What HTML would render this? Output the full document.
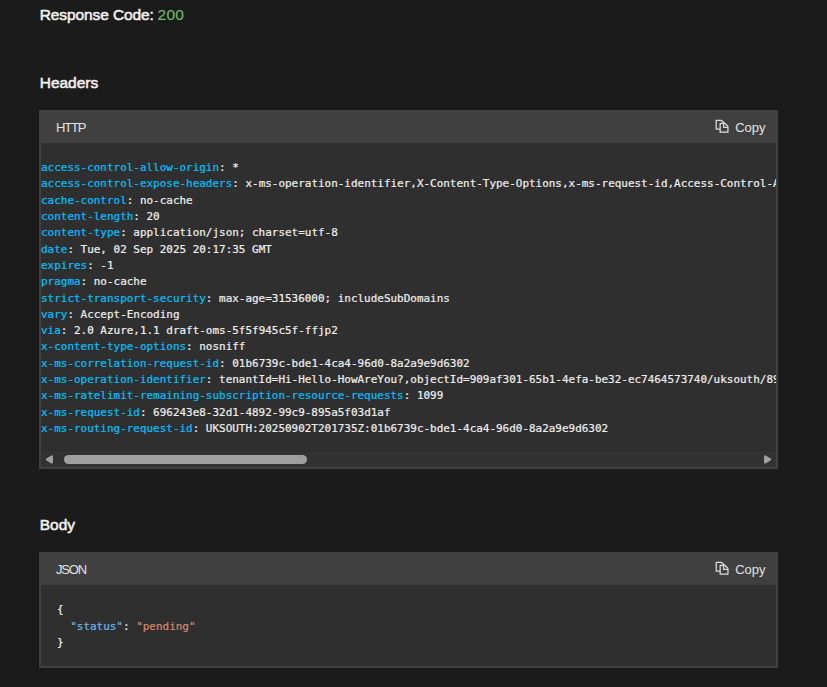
<!DOCTYPE html>
<html lang="en">
<head>
<meta charset="utf-8">
<title>Response</title>
<style>
  html, body { margin: 0; padding: 0; }
  body {
    width: 827px; height: 687px; overflow: hidden; position: relative;
    background: #1b1b1b; color: #e6e6e6;
    font-family: "Liberation Sans", sans-serif;
  }
  .h {
    position: absolute; left: 39.7px; margin: 0; white-space: nowrap;
    font-weight: normal; font-size: 15.5px; line-height: 20px; color: #f0f0f0; -webkit-text-stroke: 0.55px;
  }
  .h .ok { color: #6cbd6c; font-size: 15.5px; letter-spacing: 0.3px; margin-left: -0.5px; -webkit-text-stroke: 0.15px; }
  .block {
    position: absolute; left: 39px; width: 735px;
    border: 2px solid #404040; background: #2f2f2f; overflow: hidden;
  }
  .bar {
    position: relative; height: 31px; background: #404040;
    font-size: 13px; line-height: 31px; color: #e3e3e3;
  }
  .bar .lang { position: absolute; left: 15px; top: 0; letter-spacing: -1.2px; }
  .bar .copy { position: absolute; right: 10.5px; top: 0; opacity: 0.999; }
  .bar svg { position: absolute; left: 671px; top: 4px; }
  pre {
    margin: 0; white-space: pre; overflow: hidden;
    font-family: "DejaVu Sans Mono", "Liberation Mono", monospace;
    font-size: 10.963px; line-height: 16.31px; color: #efefef; -webkit-text-stroke: 0.2px;
  }
  .k { color: #00c0ff; }
  .a { color: #6fb9e8; }
  .s { color: #d8896b; }
  .sb { position: absolute; left: 0; right: 0; bottom: 0; height: 15px; background: #323232; }
  .sb .thumb { position: absolute; left: 23px; top: 3px; width: 243px; height: 9px; border-radius: 4.5px; background: #9f9f9f; }
  .sb svg { position: absolute; top: 2px; }
  .sb .l { left: 3px; }
  .sb .r { right: 3px; }
</style>
</head>
<body>
  <h2 class="h" style="top:5px; letter-spacing:-0.1px">Response Code: <span class="ok">200</span></h2>
  <h2 class="h" style="top:73px">Headers</h2>

  <div class="block" style="top:110px; height:355px">
    <div class="bar">
      <span class="lang">HTTP</span>
      <svg width="20" height="20" viewBox="0 0 20 20" fill="none" stroke="#dedede" stroke-width="1.25" stroke-linejoin="round">
        <path d="M8.15 13.1H4.2V4.3H9.2L15.95 10.2"/>
        <path d="M11.6 7.45H8.15V16.2H15.95V10.2"/>
        <path d="M11.6 6.5V11.3H15.95"/>
      </svg>
      <span class="copy">Copy</span>
    </div>
    <pre style="padding:17px 0 0 0"><span class="k">access-control-allow-origin</span>: *
<span class="k">access-control-expose-headers</span>: x-ms-operation-identifier,X-Content-Type-Options,x-ms-request-id,Access-Control-Allow-Origin
<span class="k">cache-control</span>: no-cache
<span class="k">content-length</span>: 20
<span class="k">content-type</span>: application/json; charset=utf-8
<span class="k">date</span>: Tue, 02 Sep 2025 20:17:35 GMT
<span class="k">expires</span>: -1
<span class="k">pragma</span>: no-cache
<span class="k">strict-transport-security</span>: max-age=31536000; includeSubDomains
<span class="k">vary</span>: Accept-Encoding
<span class="k">via</span>: 2.0 Azure,1.1 draft-oms-5f5f945c5f-ffjp2
<span class="k">x-content-type-options</span>: nosniff
<span class="k">x-ms-correlation-request-id</span>: 01b6739c-bde1-4ca4-96d0-8a2a9e9d6302
<span class="k">x-ms-operation-identifier</span>: tenantId=Hi-Hello-HowAreYou?,objectId=909af301-65b1-4efa-be32-ec7464573740/uksouth/8978a2c1-4d7e-4f0b-9c3a-2b1f6e5d4c3b
<span class="k">x-ms-ratelimit-remaining-subscription-resource-requests</span>: 1099
<span class="k">x-ms-request-id</span>: 696243e8-32d1-4892-99c9-895a5f03d1af
<span class="k">x-ms-routing-request-id</span>: UKSOUTH:20250902T201735Z:01b6739c-bde1-4ca4-96d0-8a2a9e9d6302</pre>
    <div class="sb"><svg class="l" width="11" height="11" viewBox="0 0 11 11"><path d="M7.9 2.5V8.5L2.9 5.5Z" fill="#9f9f9f" stroke="#9f9f9f" stroke-width="2.2" stroke-linejoin="round"/></svg><i class="thumb"></i><svg class="r" width="11" height="11" viewBox="0 0 11 11"><path d="M3.1 2.5V8.5L8.1 5.5Z" fill="#9f9f9f" stroke="#9f9f9f" stroke-width="2.2" stroke-linejoin="round"/></svg></div>
  </div>

  <h2 class="h" style="top:515px">Body</h2>

  <div class="block" style="top:552px; height:112px">
    <div class="bar">
      <span class="lang">JSON</span>
      <svg width="20" height="20" viewBox="0 0 20 20" fill="none" stroke="#dedede" stroke-width="1.25" stroke-linejoin="round">
        <path d="M8.15 13.1H4.2V4.3H9.2L15.95 10.2"/>
        <path d="M11.6 7.45H8.15V16.2H15.95V10.2"/>
        <path d="M11.6 6.5V11.3H15.95"/>
      </svg>
      <span class="copy">Copy</span>
    </div>
    <pre style="padding:17.4px 0 0 16px">{
  <span class="a">"status"</span>: <span class="s">"pending"</span>
}</pre>
  </div>
</body>
</html>
